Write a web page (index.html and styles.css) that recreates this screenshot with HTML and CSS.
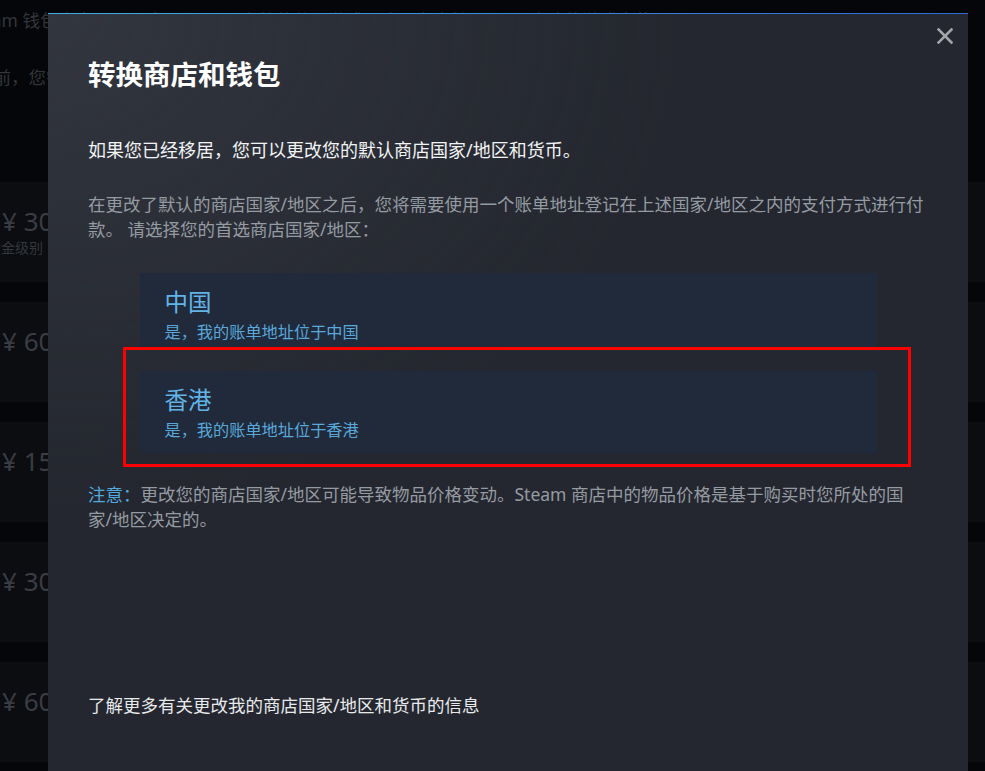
FILE: index.html
```html
<!DOCTYPE html>
<html lang="zh-CN">
<head>
<meta charset="utf-8">
<title>转换商店和钱包</title>
<link rel="stylesheet" href="styles.css">
</head>
<body>
<div class="store">
  <p class="store-intro">Steam 钱包资金可用于购买 Steam 上的软件、游戏，也可在支持 Steam 内购的游戏中使用。</p>
  <p class="store-note">之前，您需要先为您的 Steam 钱包充值。</p>
  <div class="tiers">
    <div class="tier"><span class="tier-price">¥ 30</span><span class="tier-level">黄金级别</span></div>
    <div class="tier"><span class="tier-price">¥ 60</span></div>
    <div class="tier"><span class="tier-price">¥ 150</span></div>
    <div class="tier"><span class="tier-price">¥ 300</span></div>
    <div class="tier"><span class="tier-price">¥ 600</span></div>
  </div>
</div>

<div class="modal">
  <button class="modal-close" aria-label="关闭">
    <svg width="16" height="16" viewBox="0 0 16 16"><path d="M1.5 1.5 L14.5 14.5 M14.5 1.5 L1.5 14.5" stroke="#a2a5aa" stroke-width="2.6" stroke-linecap="square" fill="none"/></svg>
  </button>
  <h1 class="modal-title">转换商店和钱包</h1>
  <p class="lead">如果您已经移居，您可以更改您的默认商店国家/地区和货币。</p>
  <p class="desc">在更改了默认的商店国家/地区之后，您将需要使用一个账单地址登记在上述国家/地区之内的支付方式进行付<br>款。 请选择您的首选商店国家/地区：</p>
  <div class="options">
    <div class="option option-short">
      <div class="option-name">中国</div>
      <div class="option-sub">是，我的账单地址位于中国</div>
    </div>
    <div class="option">
      <div class="option-name">香港</div>
      <div class="option-sub">是，我的账单地址位于香港</div>
    </div>
  </div>
  <p class="desc note"><span class="note-label">注意：</span>更改您的商店国家/地区可能导致物品价格变动。Steam 商店中的物品价格是基于购买时您所处的国<br>家/地区决定的。</p>
  <p class="more">了解更多有关更改我的商店国家/地区和货币的信息</p>
  <div class="highlight"></div>
</div>
</body>
</html>
```

FILE: styles.css
```css
html, body {
  margin: 0;
  padding: 0;
  height: 100%;
  overflow: hidden;
}

body {
  background: #040609;
  font-family: "Noto Sans", "Noto Sans CJK SC", sans-serif;
  position: relative;
}

/* Background store page (dimmed) */
.store {
  color: #33363a;
  font-size: 17.5px;
  line-height: 25px;
}

.store-intro {
  margin: 0;
  padding-top: 8px;
  margin-left: -34px;
  white-space: nowrap;
}

.store-note {
  margin: 32px 0 0 -24px;
  white-space: nowrap;
}

.tiers {
  margin-top: 92px;
  display: flex;
  flex-direction: column;
  gap: 20px;
}

.tier {
  height: 100px;
  background: #0b0d11;
  padding: 24px 0 0 2px;
  box-sizing: border-box;
  display: flex;
  flex-direction: column;
}

.tier-price {
  font-size: 26px;
  line-height: 30px;
  color: #3a3d42;
}

.tier-level {
  margin-left: -15px;
  margin-top: 2px;
  font-size: 14px;
  line-height: 20px;
  color: #34373b;
}

/* Modal */
.modal {
  position: absolute;
  left: 48px;
  top: 13px;
  width: 920px;
  bottom: 0;
  box-sizing: border-box;
  border-top: 1px solid #3aa3e3;
  border-image: linear-gradient(to right, #3eb0e8, #2f6ad8) 1;
  background:
    radial-gradient(ellipse 900px 700px at 0 0, rgba(62, 66, 76, 0.55), rgba(62, 66, 76, 0) 70%),
    #24272f;
  padding: 44px 40px 0 40px;
  color: #ffffff;
}

.modal-close {
  position: absolute;
  top: 13px;
  right: 14px;
  width: 18px;
  height: 18px;
  padding: 0;
  border: 0;
  background: none;
  display: flex;
  align-items: center;
  justify-content: center;
}

.modal-title {
  margin: 0;
  font-size: 27.5px;
  line-height: 33px;
  font-weight: 700;
  color: #ffffff;
}

.lead {
  margin: 47px 0 0;
  font-size: 18px;
  line-height: 25px;
  color: #f2f3f4;
}

.desc {
  margin: 29px 0 0;
  font-size: 17.5px;
  line-height: 25px;
  color: #959ba2;
  white-space: nowrap;
}

.options {
  margin: 31px auto 0;
  width: 737px;
  display: flex;
  flex-direction: column;
  gap: 23px;
}

.option {
  background: #212a3a;
  padding: 15px 25px 11px;
  height: 82px;
  box-sizing: border-box;
}

.option-short {
  height: 75px;
}

.option-name {
  font-size: 23.5px;
  line-height: 28px;
  color: #62b4e8;
}

.option-sub {
  margin-top: 4px;
  font-size: 16.2px;
  line-height: 24px;
  color: #58a8dc;
}

.note {
  margin-top: 29px;
}

.note-label {
  color: #52a8dc;
}

.more {
  margin: 161px 0 0;
  font-size: 17.5px;
  line-height: 25px;
  color: #e8eaec;
}

/* Red annotation rectangle drawn over the screenshot */
.highlight {
  position: absolute;
  left: 75px;
  top: 333px;
  width: 788px;
  height: 120px;
  box-sizing: border-box;
  border: 3px solid #ff0000;
  pointer-events: none;
}
```
